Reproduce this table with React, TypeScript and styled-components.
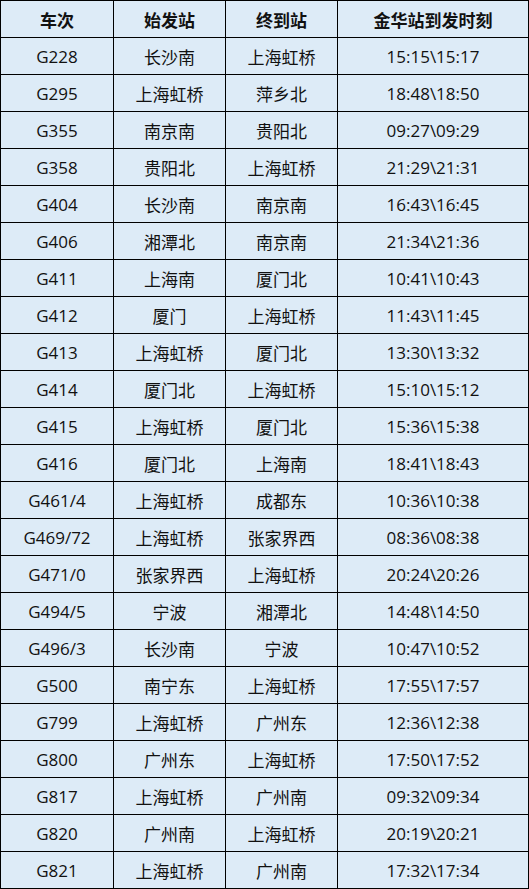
import styled, { createGlobalStyle } from 'styled-components';

const GlobalStyle = createGlobalStyle`
  html, body {
    margin: 0;
    padding: 0;
    background: #ffffff;
  }
`;

const Grid = styled.div`
  display: grid;
  grid-template-columns: 112px 111px 111px 190px;
  grid-auto-rows: 36px;
  gap: 1px;
  padding: 1px;
  width: 529px;
  box-sizing: border-box;
  background: #000000;
  font-family: "Open Sans", "Noto Sans CJK SC", sans-serif;
`;

const Cell = styled.div<{ $head?: boolean }>`
  display: flex;
  align-items: center;
  justify-content: center;
  background: #ddebf7;
  color: #111111;
  font-size: 17px;
  font-weight: ${({ $head }) => ($head ? 700 : 400)};
  white-space: nowrap;
`;

const headers = ['车次', '始发站', '终到站', '金华站到发时刻'];

const rows: [string, string, string, string][] = [
  ['G228', '长沙南', '上海虹桥', '15:15\\15:17'],
  ['G295', '上海虹桥', '萍乡北', '18:48\\18:50'],
  ['G355', '南京南', '贵阳北', '09:27\\09:29'],
  ['G358', '贵阳北', '上海虹桥', '21:29\\21:31'],
  ['G404', '长沙南', '南京南', '16:43\\16:45'],
  ['G406', '湘潭北', '南京南', '21:34\\21:36'],
  ['G411', '上海南', '厦门北', '10:41\\10:43'],
  ['G412', '厦门', '上海虹桥', '11:43\\11:45'],
  ['G413', '上海虹桥', '厦门北', '13:30\\13:32'],
  ['G414', '厦门北', '上海虹桥', '15:10\\15:12'],
  ['G415', '上海虹桥', '厦门北', '15:36\\15:38'],
  ['G416', '厦门北', '上海南', '18:41\\18:43'],
  ['G461/4', '上海虹桥', '成都东', '10:36\\10:38'],
  ['G469/72', '上海虹桥', '张家界西', '08:36\\08:38'],
  ['G471/0', '张家界西', '上海虹桥', '20:24\\20:26'],
  ['G494/5', '宁波', '湘潭北', '14:48\\14:50'],
  ['G496/3', '长沙南', '宁波', '10:47\\10:52'],
  ['G500', '南宁东', '上海虹桥', '17:55\\17:57'],
  ['G799', '上海虹桥', '广州东', '12:36\\12:38'],
  ['G800', '广州东', '上海虹桥', '17:50\\17:52'],
  ['G817', '上海虹桥', '广州南', '09:32\\09:34'],
  ['G820', '广州南', '上海虹桥', '20:19\\20:21'],
  ['G821', '上海虹桥', '广州南', '17:32\\17:34'],
];

export default function App() {
  return (
    <>
      <GlobalStyle />
      <Grid>
        {headers.map((h) => (
          <Cell key={h} $head>
            {h}
          </Cell>
        ))}
        {rows.map((row) =>
          row.map((value, idx) => <Cell key={`${row[0]}-${idx}`}>{value}</Cell>)
        )}
      </Grid>
    </>
  );
}
